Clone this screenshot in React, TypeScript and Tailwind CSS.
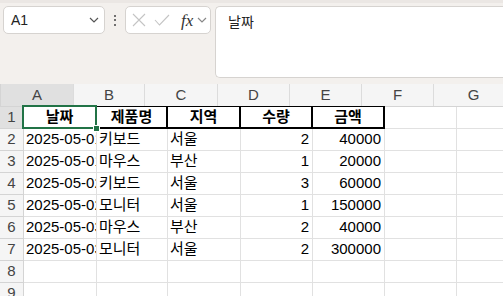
import React from "react";

const KR = '"Liberation Sans", "Noto Sans CJK KR", sans-serif';

const cols = [
  { key: "A", w: 73 },
  { key: "B", w: 71 },
  { key: "C", w: 73 },
  { key: "D", w: 72 },
  { key: "E", w: 72 },
  { key: "F", w: 72 },
  { key: "G", w: 80 },
];

const data: (string | number)[][] = [
  ["날짜", "제품명", "지역", "수량", "금액"],
  ["2025-05-01", "키보드", "서울", 2, 40000],
  ["2025-05-01", "마우스", "부산", 1, 20000],
  ["2025-05-02", "키보드", "서울", 3, 60000],
  ["2025-05-02", "모니터", "서울", 1, 150000],
  ["2025-05-03", "마우스", "부산", 2, 40000],
  ["2025-05-03", "모니터", "서울", 2, 300000],
  [],
  [],
];

function Chevron({ className }: { className?: string }) {
  return (
    <svg width="10" height="6" viewBox="0 0 10 6" className={className}>
      <path d="M1 1 L5 5 L9 1" fill="none" stroke="currentColor" strokeWidth="1.2" />
    </svg>
  );
}

export default function App() {
  return (
    <div className="w-[503px] h-[296px] overflow-hidden bg-[#f3f0ed] relative" style={{ fontFamily: KR }}>
      <div className="h-[3px] bg-[#ebe7e4]" />
      {/* Formula bar */}
      <div className="flex items-start h-[81px] pt-[3px] pl-[3px]">
        <div className="w-[102px] h-[28px] bg-white border border-[#d6d3d0] rounded-[5px] flex items-center justify-between pl-[7px] pr-[5px]">
          <span className="text-[14px] text-[#222]">A1</span>
          <Chevron className="text-[#555]" />
        </div>
        <div className="w-[20px] h-[28px] flex flex-col items-center justify-center gap-[2.5px]">
          <div className="w-[2px] h-[2px] bg-[#444] rounded-full" />
          <div className="w-[2px] h-[2px] bg-[#444] rounded-full" />
          <div className="w-[2px] h-[2px] bg-[#444] rounded-full" />
        </div>
        <div className="w-[86px] h-[28px] bg-white border border-[#d6d3d0] rounded-[5px] flex items-center pl-[6px]">
          <svg width="14" height="14" viewBox="0 0 14 14">
            <path d="M1 1 L13 13 M13 1 L1 13" stroke="#c4c4c4" strokeWidth="1.1" />
          </svg>
          <svg width="16" height="12" viewBox="0 0 16 12" className="ml-[8px]">
            <path d="M1 6 L5.5 11 L15 1" fill="none" stroke="#c4c4c4" strokeWidth="1.1" />
          </svg>
          <span className="ml-[11px] text-[17px] italic text-[#333] leading-none" style={{ fontFamily: '"Liberation Serif", serif' }}>fx</span>
          <Chevron className="ml-[4px] text-[#888]" />
        </div>
        <div className="ml-[4px] flex-1 h-[72px] bg-white border border-[#d6d3d0] rounded-l-[5px] border-r-0 pl-[12px] pt-[3px]">
          <span className="text-[14px] text-[#222]">날짜</span>
        </div>
      </div>

      {/* Grid */}
      <div className="relative bg-white">
        {/* column header row */}
        <div className="flex h-[23px] bg-[#f5f5f5] border-b border-[#d4d4d4]">
          <div className="w-[24px] h-full border-r border-[#d4d4d4] relative">
            <svg width="14" height="14" viewBox="0 0 14 14" className="absolute right-[2px] bottom-[2px]">
              <path d="M13 1 L13 13 L1 13 Z" fill="#d6d6d6" />
            </svg>
          </div>
          {cols.map((c, i) => (
            <div
              key={c.key}
              className={`h-full flex items-center justify-center text-[15px] text-[#444] border-r border-[#dcdcdc] shrink-0 ${i === 0 ? "bg-[#e0e0e0]" : ""}`}
              style={{ width: c.w }}
            >
              {c.key}
            </div>
          ))}
        </div>
        {data.map((row, r) => (
          <div key={r} className="flex h-[22px]">
            <div
              className={`w-[24px] h-full shrink-0 flex items-center justify-center text-[15px] text-[#444] border-r border-b border-[#d4d4d4] ${r === 0 ? "bg-[#e0e0e0]" : "bg-[#f5f5f5]"}`}
            >
              {r + 1}
            </div>
            {cols.map((c, ci) => {
              const v = row[ci];
              const isNum = typeof v === "number";
              const header = r === 0 && ci < 5;
              return (
                <div
                  key={c.key}
                  className={`h-full shrink-0 overflow-hidden whitespace-nowrap flex items-center text-[15px] text-black ${
                    header
                      ? "border-r-2 border-b-2 border-black justify-center font-bold"
                      : "border-r border-b border-[#e1e1e1]"
                  } ${isNum ? "justify-end pr-[3px]" : header ? "" : "pl-[2px]"}`}
                  style={{ width: c.w }}
                >
                  {v === undefined ? "" : String(v)}
                </div>
              );
            })}
          </div>
        ))}
        {/* black top line above header cells */}
        <div className="absolute left-[23px] top-[22px] w-[362px] h-[1px] bg-black" />
        {/* selection */}
        <div className="absolute left-[22px] top-[21px] w-[75px] h-[24px] border-2 border-[#217346]" />
        <div className="absolute left-[93px] top-[41px] w-[7px] h-[7px] bg-[#217346] border border-white" />
      </div>
    </div>
  );
}
